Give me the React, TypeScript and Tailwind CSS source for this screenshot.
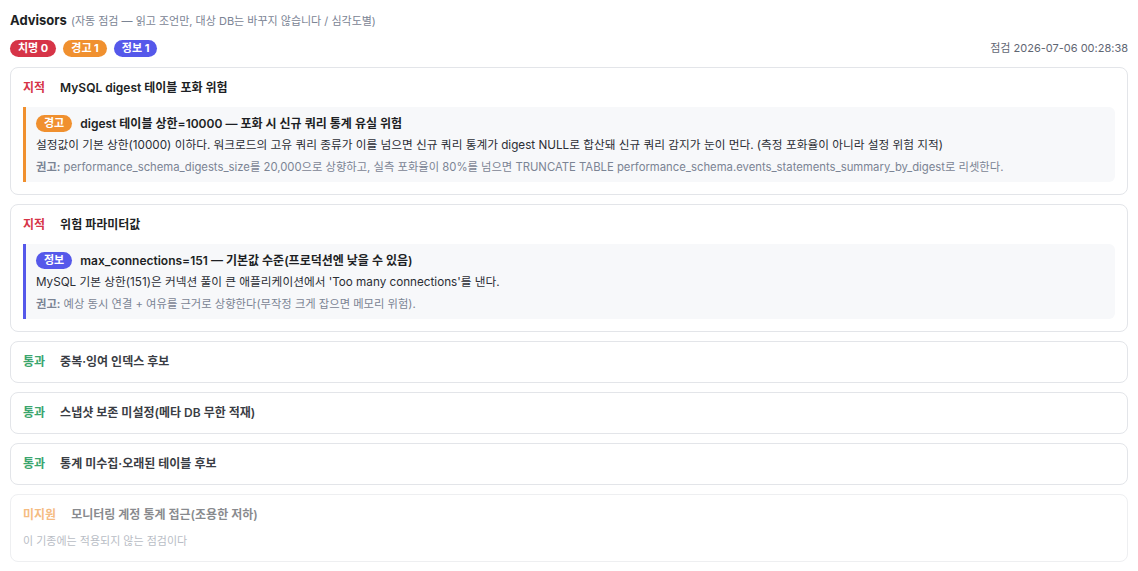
import { ReactNode } from 'react';

type Severity = 'warn' | 'info';

type Finding = {
  severity: Severity;
  title: string;
  detail: string;
  advice: string;
};

type Check = {
  status: 'fail' | 'pass' | 'na';
  name: string;
  findings?: Finding[];
  note?: string;
};

const checks: Check[] = [
  {
    status: 'fail',
    name: 'MySQL digest 테이블 포화 위험',
    findings: [
      {
        severity: 'warn',
        title: 'digest 테이블 상한=10000 — 포화 시 신규 쿼리 통계 유실 위험',
        detail:
          '설정값이 기본 상한(10000) 이하다. 워크로드의 고유 쿼리 종류가 이를 넘으면 신규 쿼리 통계가 digest NULL로 합산돼 신규 쿼리 감지가 눈이 먼다. (측정 포화율이 아니라 설정 위험 지적)',
        advice:
          'performance_schema_digests_size를 20,000으로 상향하고, 실측 포화율이 80%를 넘으면 TRUNCATE TABLE performance_schema.events_statements_summary_by_digest로 리셋한다.',
      },
    ],
  },
  {
    status: 'fail',
    name: '위험 파라미터값',
    findings: [
      {
        severity: 'info',
        title: 'max_connections=151 — 기본값 수준(프로덕션엔 낮을 수 있음)',
        detail: "MySQL 기본 상한(151)은 커넥션 풀이 큰 애플리케이션에서 'Too many connections'를 낸다.",
        advice: '예상 동시 연결 + 여유를 근거로 상향한다(무작정 크게 잡으면 메모리 위험).',
      },
    ],
  },
  { status: 'pass', name: '중복·잉여 인덱스 후보' },
  { status: 'pass', name: '스냅샷 보존 미설정(메타 DB 무한 적재)' },
  { status: 'pass', name: '통계 미수집·오래된 테이블 후보' },
  { status: 'na', name: '모니터링 계정 통계 접근(조용한 저하)', note: '이 기종에는 적용되지 않는 점검이다' },
];

function Pill({ className, children }: { className: string; children: ReactNode }) {
  return (
    <span className={`inline-flex h-[17px] items-center rounded-full px-2 text-[11px] font-bold text-white ${className}`}>
      {children}
    </span>
  );
}

function FindingBox({ f }: { f: Finding }) {
  const warn = f.severity === 'warn';
  return (
    <div
      className={`mt-[11px] rounded-r-md border-l-[3px] bg-[#f7f8fa] pt-2 pb-[7px] pl-2.5 pr-3 ${
        warn ? 'border-[#f0902f]' : 'border-[#5558ea]'
      }`}
    >
      <div className="flex items-center gap-2">
        <Pill className={warn ? 'bg-[#f0902f]' : 'bg-[#5558ea]'}>{warn ? '경고' : '정보'}</Pill>
        <span className="text-[12px] font-semibold text-[#1d1f24]">{f.title}</span>
      </div>
      <p className="mt-[3px] text-[11.7px] leading-[18px] text-[#2b2e35]">{f.detail}</p>
      <p className="mt-[5px] text-[11.3px] leading-4 text-[#7b8494]">
        <span className="font-semibold">권고:</span> {f.advice}
      </p>
    </div>
  );
}

function CheckCard({ c }: { c: Check }) {
  const label =
    c.status === 'fail'
      ? { text: '지적', cls: 'text-[#d63447]' }
      : c.status === 'pass'
        ? { text: '통과', cls: 'text-[#3aa56d]' }
        : { text: '미지원', cls: 'text-[#f0902f]' };

  return (
    <div className={`rounded-lg border border-[#e3e5e9] bg-white px-3 py-3 ${c.status === 'na' ? 'opacity-60' : ''}`}>
      <div className="flex items-center gap-[15px] leading-4">
        <span className={`text-[12px] font-bold ${label.cls}`}>{label.text}</span>
        <span className={`text-[12px] font-semibold ${c.status === 'fail' ? 'text-[#1d1f24]' : 'text-[#3a3d44]'}`}>
          {c.name}
        </span>
      </div>
      {c.findings?.map((f) => <FindingBox key={f.title} f={f} />)}
      {c.note && <p className="mt-2.5 text-[11px] leading-4 text-[#8a919e]">{c.note}</p>}
    </div>
  );
}

export default function App() {
  return (
    <div className="min-h-screen bg-white px-2.5 pt-[11px] font-['Inter','Noto_Sans_CJK_KR',sans-serif] text-[#1d1f24]">
      <div className="flex items-baseline gap-1">
        <h1 className="text-[13px] font-bold">Advisors</h1>
        <span className="text-[11px] text-[#7b8494]">(자동 점검 — 읽고 조언만, 대상 DB는 바꾸지 않습니다 / 심각도별)</span>
      </div>

      <div className="mt-[9px] flex items-center justify-between">
        <div className="flex gap-[7px]">
          <Pill className="bg-[#d63447]">치명 0</Pill>
          <Pill className="bg-[#f0902f]">경고 1</Pill>
          <Pill className="bg-[#5558ea]">정보 1</Pill>
        </div>
        <span className="text-[11px] text-[#5f6673]">점검 2026-07-06 00:28:38</span>
      </div>

      <div className="mt-[10px] flex flex-col gap-[9px] pb-2.5">
        {checks.map((c) => (
          <CheckCard key={c.name} c={c} />
        ))}
      </div>
    </div>
  );
}
